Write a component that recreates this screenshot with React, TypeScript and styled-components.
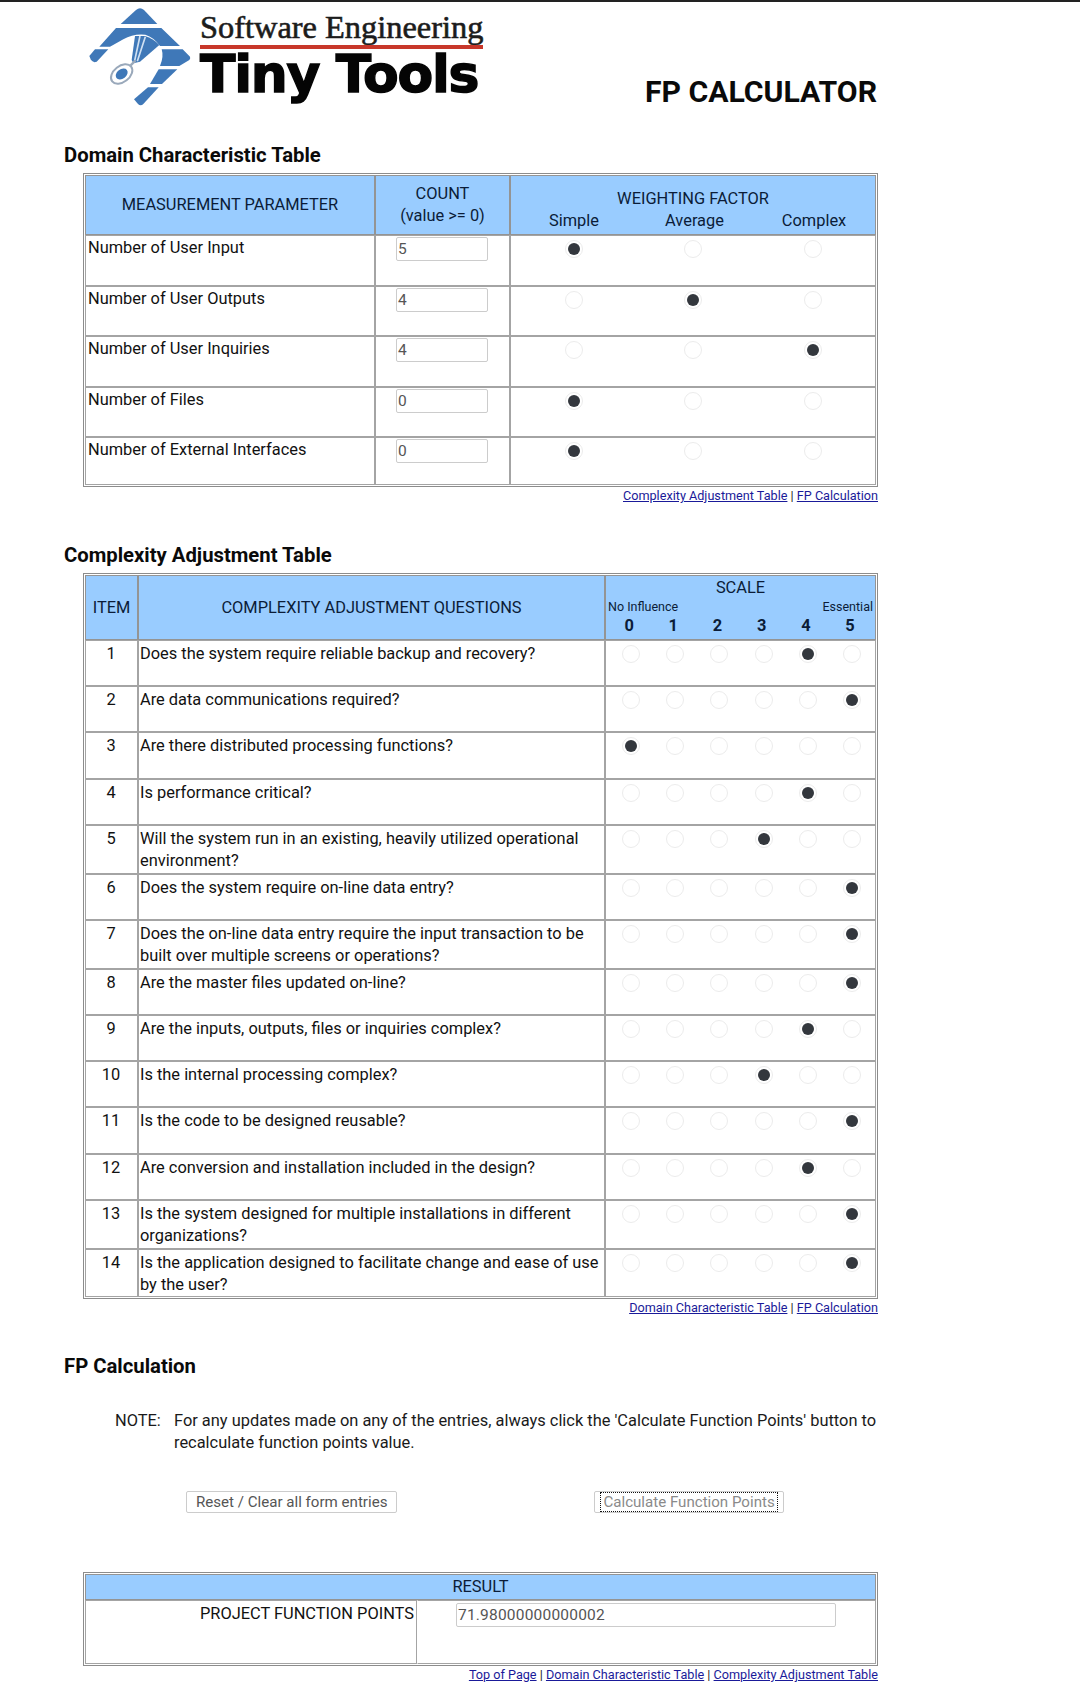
import React from "react";
import styled, { createGlobalStyle } from "styled-components";

const GlobalStyle = createGlobalStyle`
  html, body {
    margin: 0;
    padding: 0;
    background: #fff;
    color: #111;
    font-family: Roboto, "Liberation Sans", sans-serif;
    font-size: 16.4px;
  }
`;

const Page = styled.div`
  width: 1080px;
  height: 1698px;
  overflow: hidden;
  border-top: 2px solid #222;
  box-sizing: border-box;
`;

const Header = styled.header`
  display: flex;
  height: 139px;
  width: 877px;
  padding-left: 80px;
  box-sizing: border-box;
  justify-content: space-between;
`;

const Logo = styled.div`
  display: flex;
  align-items: flex-start;
`;

const LogoWords = styled.div`
  display: flex;
  flex-direction: column;
  width: 283px;
  padding-top: 9px;
`;

const LogoTop = styled.div`
  font: 400 32.4px/32px "Liberation Serif", serif;
  color: #1c1c1c;
  white-space: nowrap;
  -webkit-text-stroke: 0.6px #1c1c1c;
`;

const LogoRule = styled.div`
  height: 4px;
  background: #c8372a;
  margin-top: 2px;
`;

const LogoBottom = styled.div`
  font: bold 52px/50px "DejaVu Sans", sans-serif;
  color: #050505;
  white-space: nowrap;
  -webkit-text-stroke: 1.4px #050505;
  letter-spacing: -1.3px;
`;

const Title = styled.h1`
  margin: 71px 0 0;
  font-size: 30.2px;
  line-height: 38px;
  font-weight: 700;
  color: #0a0a0a;
`;

const Heading = styled.h2`
  margin: 0;
  padding-left: 64px;
  font-size: 20.3px;
  line-height: 28px;
  font-weight: 700;
  color: #0a0a0a;
`;

const Section = styled.section<{ $gap?: number }>`
  width: 878px;
  margin-top: ${(p) => p.$gap || 0}px;
`;

const Grid = styled.table<{ $gap: number }>`
  margin: ${(p) => p.$gap}px 0 0 83px;
  width: 795px;
  box-sizing: border-box;
  padding: 1px;
  border: 1px solid #8c8c8c;
  border-collapse: separate;
  border-spacing: 0;
  table-layout: fixed;
`;

const Col = styled.col<{ $w: number }>`
  width: ${(p) => p.$w}px;
`;

const Head = styled.th<{ $h?: number; $top?: boolean }>`
  background: #99ccff;
  border: 1px solid #949494;
  color: #0b1c38;
  font-weight: 400;
  font-size: 16.4px;
  line-height: 22px;
  padding: 0;
  text-align: center;
  vertical-align: ${(p) => (p.$top ? "top" : "middle")};
  ${(p) => (p.$h ? `height: ${p.$h}px;` : "")}
  box-sizing: border-box;
`;

const Cell = styled.td<{ $h: number; $align?: string; $tight?: boolean }>`
  border: 1px solid #a4a4a4;
  height: ${(p) => p.$h}px;
  padding: ${(p) => (p.$tight ? "2px 2px 0 1px" : "1px 2px 0 2px")};
  box-sizing: border-box;
  vertical-align: top;
  font-size: 16.4px;
  line-height: 22px;
  text-align: ${(p) => p.$align || "left"};
`;

const CountInput = styled.input`
  display: block;
  width: 92px;
  height: 24px;
  margin: 0 0 0 18px;
  padding: 0 1px;
  border: 1px solid #ccc;
  border-radius: 2px;
  box-sizing: border-box;
  font: 15.5px Roboto, sans-serif;
  color: #555;
  background: #fff;
`;

const WeightHead = styled.div`
  padding-top: 12px;
`;

const WeightLabels = styled.div`
  display: grid;
  grid-template-columns: 122px 119px 120px;
  padding-left: 2px;
`;

const ChoiceRow = styled.div<{ $cols: string; $pad?: number }>`
  display: grid;
  grid-template-columns: ${(p) => p.$cols};
  justify-items: center;
  margin-top: 3px;
  padding-left: ${(p) => p.$pad || 0}px;
`;

const Radio = styled.span<{ $on?: boolean }>`
  display: block;
  width: 18px;
  height: 18px;
  border-radius: 50%;
  border: 1px solid #ececec;
  box-sizing: border-box;
  background: #fff;
  position: relative;
  &::after {
    content: "";
    display: ${(p) => (p.$on ? "block" : "none")};
    position: absolute;
    left: 2px;
    top: 2px;
    width: 12px;
    height: 12px;
    border-radius: 50%;
    background: #33373d;
  }
`;

const Links = styled.div`
  text-align: right;
  font-size: 12.65px;
  line-height: 16px;
  padding-top: 1px;
  color: #222;
  a {
    color: #1a1a99;
    text-decoration: underline;
  }
`;

const ScaleTitle = styled.div`
  line-height: 22px;
  padding-top: 1px;
`;

const ScaleEnds = styled.div`
  display: flex;
  justify-content: space-between;
  font-size: 12.5px;
  line-height: 16px;
  padding: 0 2px;
`;

const ScaleNums = styled.div`
  display: grid;
  grid-template-columns: repeat(6, 44.2px);
  justify-items: center;
  padding: 1px 0 0 1px;
  font-weight: 700;
  line-height: 20px;
`;

const Note = styled.div`
  display: flex;
  margin: 30px 0 0 115px;
  width: 763px;
  line-height: 22px;
  color: #1a1a1a;
`;

const NoteLabel = styled.span`
  width: 59px;
  flex: none;
`;

const Actions = styled.div`
  display: flex;
  margin: 37px 0 0 186px;
  gap: 197px;
`;

const Button = styled.button<{ $dim?: boolean }>`
  display: flex;
  align-items: center;
  height: 22px;
  padding: 0 ${(p) => (p.$dim ? 5 : 9)}px;
  border: 1px solid #ccc;
  border-radius: 2px;
  background: #fff;
  font: 15.1px Roboto, sans-serif;
  color: ${(p) => (p.$dim ? "#8a8a8a" : "#555")};
  white-space: nowrap;
`;

const Focus = styled.span`
  display: block;
  height: 20px;
  line-height: 18px;
  box-sizing: border-box;
  border: 1px dotted #111;
  padding: 0 2px;
`;

const ResultInput = styled.input`
  display: block;
  width: 380px;
  height: 24px;
  margin: 1px 0 0 38px;
  padding: 0 1px;
  border: 1px solid #ccc;
  border-radius: 2px;
  box-sizing: border-box;
  font: 15.5px Roboto, sans-serif;
  color: #555;
  letter-spacing: 0.2px;
`;

const ResultValueCell = styled.td`
  padding: 1px 0 0;
  vertical-align: top;
  border: 1px solid #a4a4a4;
  border-left-color: transparent;
`;

const LogoMark = () => (
  <svg width="120" height="113" viewBox="0 6 360 339">
    <g fill="#3f78b8">
      <path d="M168 30 Q180 20 192 30 L232 72 L122 72 Z" />
      <path d="M108 84 L244 84 L300 138 L240 138 Q222 112 196 104 Q160 100 130 118 L90 140 L58 140 Z" />
      <path d="M45 148 L85 148 L50 185 Q38 190 32 178 L28 168 Z" />
      <path d="M245 148 L308 148 L330 170 Q332 175 328 180 L298 198 L240 198 Q252 170 245 148 Z" />
      <path d="M236 208 L292 208 L246 252 L210 252 Z" />
      <path d="M204 262 L236 262 L190 312 Q182 320 174 312 L162 298 Z" />
      <path d="M165 108 L195 108 Q220 115 238 135 L180 185 L160 190 L155 180 Z" />
    </g>
    <path d="M180 108 L164 182 M196 110 L172 184" stroke="#cfe0f2" strokeWidth="5" fill="none" />
    <path d="M152 196 L166 182" stroke="#9aa9bb" strokeWidth="7" fill="none" />
    <ellipse cx="125" cy="222" rx="36" ry="24" transform="rotate(-38 125 222)" fill="#fff" stroke="#9aa9bb" strokeWidth="6" />
    <ellipse cx="125" cy="222" rx="20" ry="14" transform="rotate(-38 125 222)" fill="#3f78b8" />
  </svg>
);

const domainRows: [string, string, number, number][] = [
  ["Number of User Input", "5", 0, 51],
  ["Number of User Outputs", "4", 1, 50],
  ["Number of User Inquiries", "4", 2, 51],
  ["Number of Files", "0", 0, 50],
  ["Number of External Interfaces", "0", 0, 48],
];

const questions: [string, number, number][] = [
  ["Does the system require reliable backup and recovery?", 4, 46],
  ["Are data communications required?", 5, 46],
  ["Are there distributed processing functions?", 0, 47],
  ["Is performance critical?", 4, 46],
  ["Will the system run in an existing, heavily utilized operational environment?", 3, 49],
  ["Does the system require on-line data entry?", 5, 46],
  ["Does the on-line data entry require the input transaction to be built over multiple screens or operations?", 5, 49],
  ["Are the master files updated on-line?", 5, 46],
  ["Are the inputs, outputs, files or inquiries complex?", 4, 46],
  ["Is the internal processing complex?", 3, 46],
  ["Is the code to be designed reusable?", 5, 47],
  ["Are conversion and installation included in the design?", 4, 46],
  ["Is the system designed for multiple installations in different organizations?", 5, 49],
  ["Is the application designed to facilitate change and ease of use by the user?", 5, 48],
];

const App: React.FC = () => {
  return (
    <Page>
      <GlobalStyle />
      <Header>
        <Logo>
          <LogoMark />
          <LogoWords>
            <LogoTop>Software Engineering</LogoTop>
            <LogoRule />
            <LogoBottom>Tiny Tools</LogoBottom>
          </LogoWords>
        </Logo>
        <Title>FP CALCULATOR</Title>
      </Header>

      <Section>
        <Heading>Domain Characteristic Table</Heading>
        <Grid $gap={4}>
          <colgroup>
            <Col $w={290} />
            <Col $w={135} />
            <Col $w={366} />
          </colgroup>
          <thead>
            <tr>
              <Head $h={60}>MEASUREMENT PARAMETER</Head>
              <Head>COUNT<br />(value &gt;= 0)</Head>
              <Head $top>
                <WeightHead>
                  <span>WEIGHTING FACTOR</span>
                  <WeightLabels>
                    <span>Simple</span>
                    <span>Average</span>
                    <span>Complex</span>
                  </WeightLabels>
                </WeightHead>
              </Head>
            </tr>
          </thead>
          <tbody>
            {domainRows.map(([label, count, picked, height]) => (
              <tr key={label}>
                <Cell $h={height}>{label}</Cell>
                <Cell $h={height}><CountInput readOnly value={count} /></Cell>
                <Cell $h={height}>
                  <ChoiceRow $cols="122px 116px 123px">
                    {[0, 1, 2].map((i) => <Radio key={i} $on={i === picked} />)}
                  </ChoiceRow>
                </Cell>
              </tr>
            ))}
          </tbody>
        </Grid>
        <Links>
          <a href="#c">Complexity Adjustment Table</a> | <a href="#f">FP Calculation</a>
        </Links>
      </Section>

      <Section $gap={37}>
        <Heading>Complexity Adjustment Table</Heading>
        <Grid $gap={4}>
          <colgroup>
            <Col $w={53} />
            <Col $w={467} />
            <Col $w={271} />
          </colgroup>
          <thead>
            <tr>
              <Head $h={65}>ITEM</Head>
              <Head>COMPLEXITY ADJUSTMENT QUESTIONS</Head>
              <Head $top>
                <ScaleTitle>SCALE</ScaleTitle>
                <ScaleEnds><span>No Influence</span><span>Essential</span></ScaleEnds>
                <ScaleNums>
                  {[0, 1, 2, 3, 4, 5].map((n) => <span key={n}>{n}</span>)}
                </ScaleNums>
              </Head>
            </tr>
          </thead>
          <tbody>
            {questions.map(([text, picked, height], index) => (
              <tr key={text}>
                <Cell $h={height} $align="center" $tight>{index + 1}</Cell>
                <Cell $h={height} $tight>{text}</Cell>
                <Cell $h={height}>
                  <ChoiceRow $cols="repeat(6, 44.2px)" $pad={1}>
                    {[0, 1, 2, 3, 4, 5].map((i) => <Radio key={i} $on={i === picked} />)}
                  </ChoiceRow>
                </Cell>
              </tr>
            ))}
          </tbody>
        </Grid>
        <Links>
          <a href="#d">Domain Characteristic Table</a> | <a href="#f">FP Calculation</a>
        </Links>
      </Section>

      <Section $gap={36}>
        <Heading>FP Calculation</Heading>
        <Note>
          <NoteLabel>NOTE:</NoteLabel>
          <span>For any updates made on any of the entries, always click the 'Calculate Function Points' button to recalculate function points value.</span>
        </Note>
        <Actions>
          <Button type="button">Reset / Clear all form entries</Button>
          <Button type="button" $dim><Focus>Calculate Function Points</Focus></Button>
        </Actions>
        <Grid $gap={59}>
          <colgroup>
            <Col $w={332} />
            <Col $w={459} />
          </colgroup>
          <thead>
            <tr>
              <Head colSpan={2} $h={26}>RESULT</Head>
            </tr>
          </thead>
          <tbody>
            <tr>
              <Cell $h={64} $align="right" $tight>PROJECT FUNCTION POINTS</Cell>
              <ResultValueCell><ResultInput readOnly value="71.98000000000002" /></ResultValueCell>
            </tr>
          </tbody>
        </Grid>
        <Links>
          <a href="#top">Top of Page</a> | <a href="#d">Domain Characteristic Table</a> | <a href="#c">Complexity Adjustment Table</a>
        </Links>
      </Section>
    </Page>
  );
};

export default App;
